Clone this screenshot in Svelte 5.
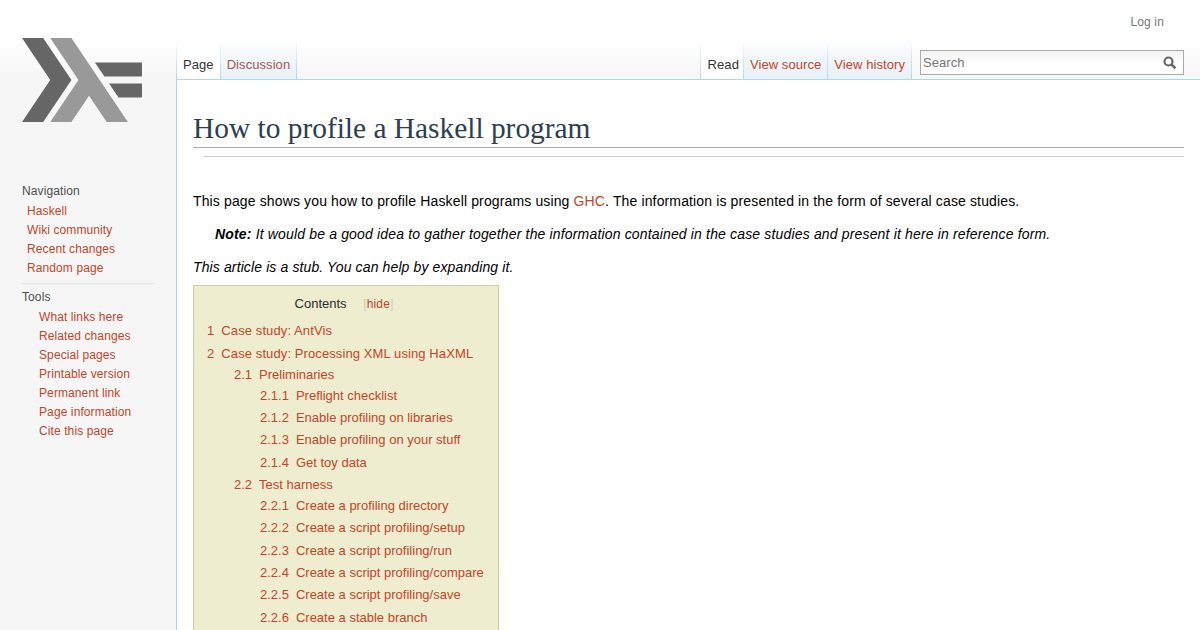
<script>
  const navLinks = ['Haskell', 'Wiki community', 'Recent changes', 'Random page'];
  const toolLinks = ['What links here', 'Related changes', 'Special pages', 'Printable version', 'Permanent link', 'Page information', 'Cite this page'];

  const subSections = [
    {
      num: '2.1', title: 'Preliminaries',
      items: [
        ['2.1.1', 'Preflight checklist'],
        ['2.1.2', 'Enable profiling on libraries'],
        ['2.1.3', 'Enable profiling on your stuff'],
        ['2.1.4', 'Get toy data']
      ]
    },
    {
      num: '2.2', title: 'Test harness',
      items: [
        ['2.2.1', 'Create a profiling directory'],
        ['2.2.2', 'Create a script profiling/setup'],
        ['2.2.3', 'Create a script profiling/run'],
        ['2.2.4', 'Create a script profiling/compare'],
        ['2.2.5', 'Create a script profiling/save'],
        ['2.2.6', 'Create a stable branch']
      ]
    }
  ];
</script>

<div class="page">
  <aside class="sidebar">
    <div class="logo">
      <svg width="120" height="84" viewBox="0 0 17 12" preserveAspectRatio="none">
        <path fill="#666" d="M0 12 4 6 0 0H3L7 6 3 12Z" />
        <path fill="#999" d="M4 12 8 6 4 0H7L15 12H12L9.5 8.25 7 12Z" />
        <path fill="#666" d="M13.67 8.5 12.33 6.5H17V8.5Z" />
        <path fill="#666" d="M11.67 5.5 10.33 3.5H17V5.5Z" />
      </svg>
    </div>

    <div class="portal first">
      <h3>Navigation</h3>
      <ul>
        {#each navLinks as link}
          <li><a href="#top">{link}</a></li>
        {/each}
      </ul>
    </div>

    <div class="portal">
      <h3>Tools</h3>
      <ul class="tools">
        {#each toolLinks as link}
          <li><a href="#top">{link}</a></li>
        {/each}
      </ul>
    </div>
  </aside>

  <div class="main">
    <header class="head">
      <div class="personal"><a href="#top">Log in</a></div>
      <div class="tabbar">
        <div class="tabs">
          <span class="tab selected">Page</span>
          <span class="tab new">Discussion</span>
        </div>
        <div class="tabs right">
          <span class="tab selected">Read</span>
          <span class="tab">View source</span>
          <span class="tab">View history</span>
          <div class="search">
            <span class="placeholder">Search</span>
            <svg width="14" height="14" viewBox="0 0 14 14">
              <circle cx="5.5" cy="5.5" r="4" fill="none" stroke="#666" stroke-width="2.2" />
              <path d="M8.4 8.4l4 4" stroke="#666" stroke-width="2.6" />
            </svg>
          </div>
        </div>
      </div>
    </header>

    <main class="content">
      <h1>How to profile a Haskell program</h1>
      <div class="subrule"></div>

      <p class="intro">This page shows you how to profile Haskell programs using <a href="#top">GHC</a>. The information is presented in the form of several case studies.</p>
      <p class="note"><b>Note:</b> It would be a good idea to gather together the information contained in the case studies and present it here in reference form.</p>
      <p class="stub">This article is a stub. You can help by expanding it.</p>

      <div class="toc">
        <div class="toc-title">
          <span>Contents</span>
          <span class="toggle">[<a href="#top">hide</a>]</span>
        </div>
        <ul class="level1">
          <li><a href="#top"><span class="num">1</span>Case study: AntVis</a></li>
          <li>
            <a href="#top"><span class="num">2</span>Case study: Processing XML using HaXML</a>
            <ul class="level2">
              {#each subSections as sec}
                <li>
                  <a href="#top"><span class="num">{sec.num}</span>{sec.title}</a>
                  <ul class="level3">
                    {#each sec.items as item}
                      <li><a href="#top"><span class="num">{item[0]}</span>{item[1]}</a></li>
                    {/each}
                  </ul>
                </li>
              {/each}
            </ul>
          </li>
        </ul>
      </div>
    </main>
  </div>
</div>

<style>
  :global(html), :global(body) {
    height: 630px;
    overflow: hidden;
  }

  :global(body) {
    background: #f6f6f6;
    font-family: "Liberation Sans", Arial, sans-serif;
  }

  a {
    color: #c4452a;
    text-decoration: none;
  }

  ul {
    list-style: none;
    margin: 0;
    padding: 0;
  }

  .page {
    display: grid;
    grid-template-columns: 176px 1fr;
    height: 630px;
    overflow: hidden;
    background: linear-gradient(#fff 40px, #f6f6f6 80px);
  }

  /* Sidebar */
  .sidebar {
    font-size: 12px;
    letter-spacing: 0.1px;
  }

  .logo {
    padding: 38px 0 0 22px;
    height: 177px;
    box-sizing: border-box;
  }

  .logo svg {
    display: block;
  }

  .portal {
    margin: 0 22px;
  }

  .portal.first {
    padding-top: 1px;
    padding-bottom: 5px;
    border-bottom: 1px solid #e0e0e0;
  }

  .portal h3 {
    margin: 0;
    font-size: 12px;
    font-weight: normal;
    color: #4d4d4d;
    line-height: 19px;
    padding-top: 4px;
    padding-bottom: 1px;
  }

  .portal ul {
    padding-left: 5px;
  }

  .portal ul.tools {
    padding-left: 17px;
  }

  .portal li {
    line-height: 19px;
  }

  /* Top bar */
  .main {
    display: flex;
    flex-direction: column;
    min-width: 0;
  }

  .head {
    height: 80px;
    flex: none;
    display: flex;
    flex-direction: column;
  }

  .personal {
    height: 40px;
    box-sizing: border-box;
    padding: 14px 36px 0 0;
    text-align: right;
    font-size: 12px;
    line-height: 16px;
    letter-spacing: 0.15px;
  }

  .personal a {
    color: #777;
  }

  .tabbar {
    flex: 1;
    display: flex;
    justify-content: space-between;
    font-size: 13px;
    letter-spacing: 0.07px;
  }

  .tabs {
    display: flex;
  }

  .tab {
    box-sizing: border-box;
    height: 40px;
    padding: 16px 7px 0 6px;
    line-height: 17px;
    color: #c4452a;
    background:
      linear-gradient(#ffffff00, #a7d7f9) right / 1px 100% no-repeat,
      linear-gradient(#ffffff00, #e8f2f8);
    border-bottom: 1px solid #a7d7f9;
  }

  .tab.selected {
    color: #333;
    background:
      linear-gradient(#ffffff00, #a7d7f9) right / 1px 100% no-repeat,
      linear-gradient(#ffffff00, #fff 60%);
    border-bottom-color: #fff;
  }

  .tab.new {
    color: #a55858;
  }

  .tabs:first-child {
    background: linear-gradient(#ffffff00, #a7d7f9) left / 1px 100% no-repeat;
    padding-left: 1px;
  }

  .tabs.right {
    border-bottom: 1px solid #a7d7f9;
    height: 40px;
    box-sizing: border-box;
    padding-right: 16px;
  }

  .tabs.right .tab.selected {
    background:
      linear-gradient(#ffffff00, #a7d7f9) left / 1px 100% no-repeat,
      linear-gradient(#ffffff00, #a7d7f9) right / 1px 100% no-repeat,
      linear-gradient(#ffffff00, #fff 60%);
    padding-left: 8px;
    padding-right: 5px;
  }

  .search {
    width: 264px;
    height: 25px;
    box-sizing: border-box;
    margin: 10px 0 0 8px;
    border: 1px solid #aaa;
    background: linear-gradient(#f3f3f3, #fff 60%);
    display: flex;
    align-items: center;
    justify-content: space-between;
    padding: 0 6px 0 2px;
    color: #777;
  }

  .search svg {
    display: block;
  }

  /* Article */
  .content {
    flex: 1;
    background: #fff;
    border-left: 1px solid #a7d7f9;
    border-top: 1px solid #a7d7f9;
    margin-top: -1px;
    padding: 29px 16px 0 16px;
    font-size: 14px;
    letter-spacing: 0.135px;
    color: #000;
  }

  h1 {
    margin: 0;
    font-family: "Liberation Serif", "Times New Roman", serif;
    font-size: 29.4px;
    font-weight: normal;
    line-height: 38px;
    letter-spacing: 0;
    color: #2c3e50;
    border-bottom: 1px solid #aaa;
  }

  .subrule {
    margin: 8px 0 0 11px;
    border-top: 1px solid #ccc;
  }

  p {
    margin: 0;
    line-height: 22px;
  }

  .intro {
    margin-top: 33px;
  }

  .note {
    margin: 11px 0 0 22px;
    font-style: italic;
    letter-spacing: 0.16px;
  }

  .stub {
    margin-top: 11px;
    font-style: italic;
    letter-spacing: 0.12px;
  }

  .toc {
    width: 306px;
    box-sizing: border-box;
    margin-top: 7px;
    background: #efedcf;
    border: 1px solid #dcc99a;
    padding: 8px 13px;
    font-size: 13px;
    letter-spacing: 0;
  }

  .toc-title {
    text-align: center;
    color: #2a2a2a;
    line-height: 20px;
    padding-right: 4px;
  }

  .toggle {
    font-size: 12px;
    color: #ccc;
    margin-left: 13px;
    letter-spacing: 0.15px;
  }

  .level1 {
    margin-top: 6px;
  }

  .level1 > li {
    line-height: 21.8px;
    margin-top: 1.2px;
  }

  .level1 > li > a {
    letter-spacing: 0.1px;
  }

  .level2 {
    margin-left: 27px;
    margin-top: -1.05px;
  }

  .level2 > li {
    line-height: 21.05px;
  }

  .level3 {
    margin-left: 26px;
  }

  .level3 > li {
    line-height: 22.3px;
  }

  .num {
    margin-right: 7px;
  }
</style>
